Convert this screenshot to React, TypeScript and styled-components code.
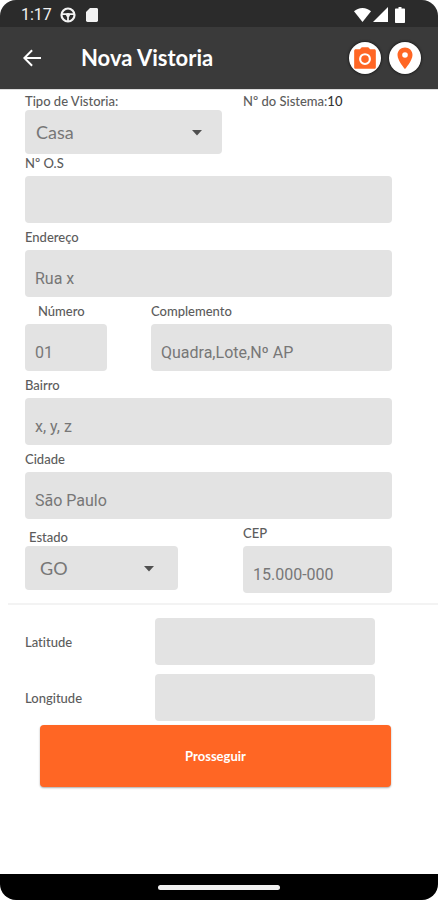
import React from "react";
import styled, { createGlobalStyle } from "styled-components";

const sans = `Lato, "Noto Sans", sans-serif`;
const orange = "#ff6624";

const GlobalStyle = createGlobalStyle`
  * { box-sizing: border-box; }
  body { margin: 0; background: #fff; }
  button, input, select { font: inherit; border: 0; margin: 0; }
`;

const Screen = styled.div`
  display: flex;
  flex-direction: column;
  min-height: 100vh;
  overflow: hidden;
  border-radius: 16px;
  background: #fff;
  color: #5c5c5c;
  font-family: ${sans};
  font-variant-ligatures: none;
`;

const StatusBar = styled.div`
  display: flex;
  align-items: center;
  justify-content: space-between;
  height: 27px;
  padding: 2px 28px 0 21px;
  background: #2b2b2b;
  color: #f2f2f2;
  font: 16px Roboto, sans-serif;
`;

const StatusGroup = styled.div<{ $gap: number }>`
  display: flex;
  align-items: center;
  gap: ${(p) => p.$gap}px;
  svg { display: block; }
`;

const AppBar = styled.header`
  display: flex;
  align-items: center;
  height: 62px;
  padding: 0 17px 0 20px;
  background: #3a3a3a;
`;

const BackButton = styled.button`
  display: flex;
  padding: 0;
  background: none;
  cursor: pointer;
`;

const Title = styled.h1`
  flex: 1;
  margin: 0 0 0 37px;
  color: #fff;
  font-size: 22px;
  font-weight: 700;
  line-height: 28px;
`;

const Actions = styled.div`
  display: flex;
  gap: 8px;
`;

const RoundButton = styled.button`
  display: flex;
  align-items: center;
  justify-content: center;
  width: 32px;
  height: 32px;
  padding: 0;
  border-radius: 50%;
  background: #fff;
  box-shadow: 0 0 2px 1px #222;
  cursor: pointer;
`;

const Form = styled.form`
  flex: 1;
  border-top: 1px solid #ddd;
`;

const Fields = styled.div`
  padding: 0 46px 0 25px;
`;

const Row = styled.div<{ $first: number; $gap: number }>`
  display: grid;
  grid-template-columns: ${(p) => p.$first}px minmax(0, 1fr);
  column-gap: ${(p) => p.$gap}px;
`;

const Label = styled.label<{ $height?: number; $indent?: number; $align?: string }>`
  display: flex;
  align-items: ${(p) => p.$align ?? "center"};
  height: ${(p) => p.$height ?? 27}px;
  padding-left: ${(p) => p.$indent ?? 0}px;
  font-size: 13px;
  font-weight: 500;
  line-height: 18px;
`;

const SystemNumber = styled.output`
  color: #333;
`;

const TextInput = styled.input`
  display: block;
  width: 100%;
  height: 47px;
  padding: 9px 10px 0;
  border-radius: 4px;
  background: #e3e3e3;
  color: #777;
  font: 16px Roboto, sans-serif;
`;

const SelectBox = styled.div<{ $inset: number; $end: number }>`
  position: relative;
  select {
    display: block;
    width: 100%;
    height: 44px;
    padding: 0 40px 0 ${(p) => p.$inset}px;
    border-radius: 4px;
    background: #e3e3e3;
    color: #777;
    font-size: 18px;
    appearance: none;
  }
  svg {
    position: absolute;
    top: 20px;
    right: ${(p) => p.$end}px;
    pointer-events: none;
  }
`;

const Divider = styled.hr`
  height: 2px;
  margin: 10px 0 13px 8px;
  border: 0;
  background: #f3f3f3;
`;

const Coordinates = styled.div`
  display: grid;
  grid-template-columns: 130px minmax(0, 1fr);
  align-items: center;
  row-gap: 9px;
  padding: 0 63px 0 25px;
`;

const SubmitArea = styled.div`
  padding: 4px 47px 24px 40px;
`;

const Submit = styled.button`
  display: block;
  width: 100%;
  height: 62px;
  border-radius: 4px;
  background: ${orange};
  box-shadow: 0 1px 2px #0005;
  color: #fff;
  font-size: 13px;
  font-weight: 700;
  cursor: pointer;
`;

const NavBar = styled.footer`
  display: flex;
  align-items: center;
  justify-content: center;
  height: 26px;
  background: #000;
`;

const HomeHandle = styled.span`
  width: 122px;
  height: 5px;
  border-radius: 3px;
  background: #f0f0f0;
`;

type TextFieldProps = {
  id: string;
  label: string;
  value?: string;
  labelHeight?: number;
  indent?: number;
  align?: string;
};

function TextField({ id, label, value, labelHeight, indent, align }: TextFieldProps) {
  return (
    <div>
      <Label htmlFor={id} $height={labelHeight} $indent={indent} $align={align}>{label}</Label>
      <TextInput id={id} defaultValue={value} />
    </div>
  );
}

type SelectFieldProps = {
  id: string;
  label: string;
  options: string[];
  inset: number;
  end: number;
  labelHeight?: number;
  indent?: number;
  align?: string;
};

function SelectField({ id, label, options, inset, end, labelHeight, indent, align }: SelectFieldProps) {
  return (
    <div>
      <Label htmlFor={id} $height={labelHeight} $indent={indent} $align={align}>{label}</Label>
      <SelectBox $inset={inset} $end={end}>
        <select id={id}>
          {options.map((o) => <option key={o}>{o}</option>)}
        </select>
        <svg width="10" height="6" viewBox="0 0 10 6" aria-hidden="true">
          <path d="M0 0h10L5 5.5z" fill="#505050" />
        </svg>
      </SelectBox>
    </div>
  );
}

export default function App() {
  return (
    <>
      <GlobalStyle />
      <Screen>
        <StatusBar>
          <StatusGroup $gap={8}>
            <span>1:17</span>
            <svg width="16" height="16" viewBox="0 0 16 16" fill="none" stroke="#f2f2f2">
              <circle cx="8" cy="8" r="6.5" strokeWidth="2.2" />
              <path d="M2 7.200h12M8 8v6" strokeWidth="1.8" />
              <circle cx="8" cy="8" r="2" fill="#f2f2f2" stroke="none" />
            </svg>
            <svg width="16" height="16" viewBox="0 0 16 16">
              <path d="M6 1h6.500c.8 0 1.500.6 1.500 1.400v11.200c0 .8-.7 1.400-1.500 1.400h-9C2.700 15 2 14.400 2 13.600V5z" fill="#f2f2f2" />
            </svg>
          </StatusGroup>
          <StatusGroup $gap={2}>
            <svg width="17" height="15" viewBox="0 0 17 15">
              <path d="M8.500 15 0 4.200C2.200 2.300 5.200 1 8.500 1S14.800 2.300 17 4.200z" fill="#fff" />
            </svg>
            <svg width="15" height="15" viewBox="0 0 15 15"><path d="M15 0v15H0z" fill="#fff" /></svg>
            <svg width="20" height="16" viewBox="0 0 20 16">
              <path d="M8.500 0h3v1.500H14c.6 0 1 .4 1 1V15c0 .6-.4 1-1 1H6c-.6 0-1-.4-1-1V2.500c0-.6.4-1 1-1h2.500z" fill="#fff" />
            </svg>
          </StatusGroup>
        </StatusBar>

        <AppBar>
          <BackButton type="button" aria-label="Voltar">
            <svg width="24" height="24" viewBox="0 0 24 24">
              <path d="M21 11H6.800l6-6L11.400 3.500 3 12l8.400 8.500 1.400-1.500-6-6H21z" fill="#fff" />
            </svg>
          </BackButton>
          <Title>Nova Vistoria</Title>
          <Actions>
            <RoundButton type="button" aria-label="Câmera">
              <svg width="26" height="26" viewBox="0 0 24 24">
                <path d="M3.500 4h3.700L9 2h6l1.800 2h3.700c1 0 1.500.6 1.500 1.500v15c0 1-.6 1.500-1.500 1.500h-17c-1 0-1.500-.6-1.500-1.500v-15C2 4.600 2.600 4 3.500 4z" fill={orange} />
                <circle cx="12" cy="13" r="4.500" fill={orange} stroke="#fff" strokeWidth="2" />
              </svg>
            </RoundButton>
            <RoundButton type="button" aria-label="Localização">
              <svg width="24" height="24" viewBox="0 0 24 24">
                <path d="M12 1.500c-4.200 0-7.500 3.200-7.500 7.400C4.500 14.500 12 23 12 23s7.500-8.500 7.500-14.100c0-4.200-3.300-7.400-7.500-7.400z" fill={orange} />
                <circle cx="12" cy="9" r="2.800" fill="#fff" />
              </svg>
            </RoundButton>
          </Actions>
        </AppBar>

        <Form onSubmit={(e) => e.preventDefault()}>
          <Fields>
            <Row $first={197} $gap={21}>
              <SelectField id="tipo" label="Tipo de Vistoria:" options={["Casa", "Apartamento"]} inset={11} end={20} labelHeight={20} align="flex-end" />
              <Label as="div" $height={20} $align="flex-end">
                Nº do Sistema:<SystemNumber>10</SystemNumber>
              </Label>
            </Row>
            <TextField id="os" label="Nº O.S" labelHeight={22} align="flex-start" />
            <TextField id="endereco" label="Endereço" value="Rua x" />
            <Row $first={82} $gap={44}>
              <TextField id="numero" label="Número" value="01" indent={13} />
              <TextField id="complemento" label="Complemento" value="Quadra,Lote,Nº AP" />
            </Row>
            <TextField id="bairro" label="Bairro" value="x, y, z" />
            <TextField id="cidade" label="Cidade" value="São Paulo" />
            <Row $first={153} $gap={65}>
              <SelectField id="estado" label="Estado" options={["GO", "SP"]} inset={15} end={24} indent={4} align="flex-end" />
              <TextField id="cep" label="CEP" value="15.000-000" />
            </Row>
          </Fields>
          <Divider />
          <Coordinates>
            <Label htmlFor="latitude">Latitude</Label>
            <TextInput id="latitude" />
            <Label htmlFor="longitude">Longitude</Label>
            <TextInput id="longitude" />
          </Coordinates>
          <SubmitArea>
            <Submit type="submit">Prosseguir</Submit>
          </SubmitArea>
        </Form>

        <NavBar><HomeHandle /></NavBar>
      </Screen>
    </>
  );
}
